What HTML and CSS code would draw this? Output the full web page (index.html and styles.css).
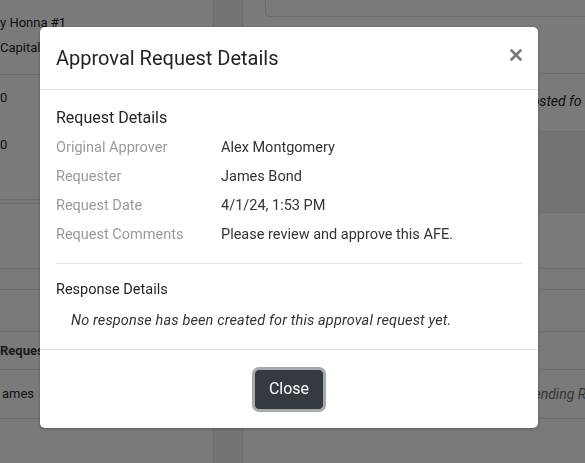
FILE: index.html
```html
<!DOCTYPE html>
<html lang="en">
<head>
<meta charset="utf-8">
<title>Approval Request Details</title>
<link rel="stylesheet" href="styles.css">
</head>
<body>
<div class="page">
  <div class="left-panel">
    <div class="lrow lr1"><div>y Honna #1</div><div>Capital</div></div>
    <div class="lrow lr2"><div class="zero z1">0</div><div class="zero z2">0</div></div>
    <div class="lrow lr3"></div>
    <div class="lrow lr4"></div>
    <div class="lrow lr5"></div>
    <div class="lrow lr6"></div>
    <div class="lrow lr7"><span class="bold">Reques</span></div>
    <div class="lrow lr8"><span class="cell-text">ames</span></div>
  </div>
  <div class="mid-panel"></div>
  <div class="right-panel">
    <div class="rrow rr0"><div class="topbox"></div></div>
    <div class="rrow rr1"></div>
    <div class="rrow rr2"><span class="ital">posted fo</span></div>
    <div class="rrow rr3"></div>
    <div class="rrow rr4"></div>
    <div class="rrow rr5"></div>
    <div class="rrow rr6"></div>
    <div class="rrow rr7"></div>
    <div class="rrow rr8"><span class="ital muted">Pending R</span></div>
  </div>
</div>

<div class="backdrop"></div>

<div class="modal" role="dialog">
  <div class="modal-header">
    <h5 class="modal-title">Approval Request Details</h5>
    <button class="close-x" aria-label="Close">
      <svg width="12" height="12" viewBox="0 0 12 12"><path d="M1.5 1.5 L10.5 10.5 M10.5 1.5 L1.5 10.5" stroke="#7a7a7a" stroke-width="2.6" stroke-linecap="round"/></svg>
    </button>
  </div>
  <div class="modal-body">
    <h6 class="section-title">Request Details</h6>
    <div class="detail-row"><div class="label">Original Approver</div><div class="value">Alex Montgomery</div></div>
    <div class="detail-row"><div class="label">Requester</div><div class="value">James Bond</div></div>
    <div class="detail-row"><div class="label">Request Date</div><div class="value">4/1/24, 1:53 PM</div></div>
    <div class="detail-row"><div class="label">Request Comments</div><div class="value">Please review and approve this AFE.</div></div>
    <hr class="divider">
    <h6 class="section-title response">Response Details</h6>
    <p class="empty-note">No response has been created for this approval request yet.</p>
  </div>
  <div class="modal-footer">
    <button class="btn-dark">Close</button>
  </div>
</div>
</body>
</html>
```

FILE: styles.css
```css
html, body {
  margin: 0;
  padding: 0;
}
body {
  font-family: Roboto, "Liberation Sans", Arial, sans-serif;
  color: #212529;
  background: #ffffff;
  width: 585px;
  height: 463px;
  overflow: hidden;
}
.page {
  display: grid;
  grid-template-columns: 213px 30px 1fr;
  height: 463px;
  font-size: 13px;
}
.left-panel, .right-panel {
  display: flex;
  flex-direction: column;
}
.lrow, .rrow {
  border-bottom: 1px solid #dee2e6;
  box-sizing: border-box;
  white-space: nowrap;
  overflow: hidden;
}
.lr1 { height: 75px; padding-top: 10px; line-height: 25px; }
.lr2 { height: 125px; }
.zero { line-height: 20px; }
.z1 { padding-top: 13px; }
.z2 { padding-top: 27px; }
.lr3 { height: 4px; }
.lr4 { height: 65px; }
.lr5 { height: 21px; }
.lr6 { height: 42px; }
.lr7 { height: 38px; line-height: 37px; }
.lr8 { height: 49px; line-height: 48px; padding-left: 2px; }
.bold { font-weight: 700; color: #343a40; }

.mid-panel {
  background: #f1f3f5;
  border-left: 1px solid #dee2e6;
  border-right: 1px solid #dee2e6;
}

.rr0 { height: 17px; border-bottom: none; padding-left: 22px; }
.topbox {
  height: 17px;
  box-sizing: border-box;
  border: 1px solid #dee2e6;
  border-top: none;
  border-right: none;
  border-bottom-left-radius: 5px;
}
.rr1 { height: 57px; }
.rr2 { height: 58px; line-height: 54px; padding-left: 281px; font-size: 14px; }
.rr3 { height: 81px; background: #f1f3f5; }
.rr4 { height: 56px; }
.rr5 { height: 21px; }
.rr6 { height: 42px; }
.rr7 { height: 38px; }
.rr8 { height: 49px; line-height: 48px; padding-left: 282px; font-size: 14px; }
.ital { font-style: italic; color: #212529; }
.muted { color: #6c757d; }

.backdrop {
  position: fixed;
  inset: 0;
  background: rgba(0, 0, 0, 0.52);
}

.modal {
  position: absolute;
  top: 27px;
  left: 40px;
  width: 498px;
  background: #ffffff;
  border-radius: 5px;
  box-shadow: 0 1px 3px rgba(0, 0, 0, 0.25);
  display: flex;
  flex-direction: column;
}
.modal-header {
  display: flex;
  justify-content: space-between;
  align-items: flex-start;
  padding: 16px;
  border-bottom: 1px solid #e3e3e3;
}
.modal-title {
  margin: 0;
  font-size: 20px;
  font-weight: 400;
  line-height: 30px;
  color: #212529;
}
.close-x {
  border: none;
  background: none;
  padding: 0;
  margin: 6px 0 0 0;
  width: 12px;
  height: 12px;
  display: flex;
  cursor: pointer;
}
.modal-body {
  padding: 16px 16px 18.5px;
}
.section-title {
  margin: 0 0 3px;
  font-size: 16px;
  font-weight: 400;
  line-height: 24px;
  color: #212529;
}
.detail-row {
  display: grid;
  grid-template-columns: 165px 1fr;
  font-size: 14.5px;
  line-height: 21px;
  padding: 4px 0;
}
.label { color: #9a9a9a; }
.value { color: #333333; }
.divider {
  border: none;
  border-top: 1px solid #e5e5e5;
  margin: 14px 0;
}
.section-title.response {
  font-size: 14.5px;
  margin-bottom: 7.5px;
}
.empty-note {
  margin: 0;
  padding-left: 15px;
  font-size: 14.5px;
  letter-spacing: 0.14px;
  line-height: 21px;
  font-style: italic;
  color: #333333;
}
.modal-footer {
  display: flex;
  justify-content: center;
  padding: 19.5px 16px;
  border-top: 1px solid #e3e3e3;
}
.btn-dark {
  font-family: Roboto, "Liberation Sans", Arial, sans-serif;
  font-size: 16px;
  line-height: 24px;
  padding: 6px 12px;
  height: 39px;
  width: 68px;
  color: #ffffff;
  background: #343a40;
  border: 1px solid #343a40;
  border-radius: 4px;
  box-shadow: 0 0 0 3px #a6a9ad;
}
```
